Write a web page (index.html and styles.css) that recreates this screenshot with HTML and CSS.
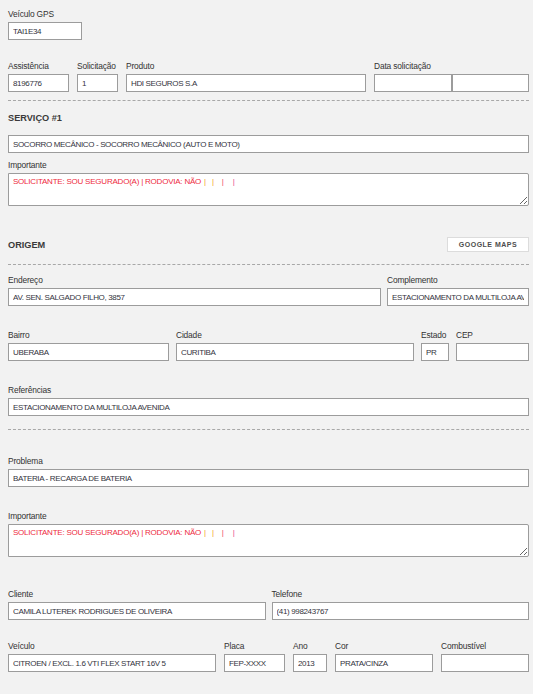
FILE: index.html
```html
<!DOCTYPE html>
<html lang="pt-BR">
<head>
<meta charset="utf-8">
<title>Serviço</title>
<link rel="stylesheet" href="styles.css">
</head>
<body>
<div class="page">
  <div class="field w-gps">
    <label class="lbl">Veículo GPS</label>
    <input class="inp" value="TAI1E34">
  </div>

  <div class="row row-ids mt20">
    <div class="field"><label class="lbl">Assistência</label><input class="inp" value="8196776"></div>
    <div class="field"><label class="lbl">Solicitação</label><input class="inp" value="1"></div>
    <div class="field"><label class="lbl">Produto</label><input class="inp" value="HDI SEGUROS S.A"></div>
    <div class="field">
      <label class="lbl">Data solicitação</label>
      <div class="pair"><input class="inp" value=""><input class="inp" value=""></div>
    </div>
  </div>

  <hr class="dash mt8">

  <div class="heading mt10">SERVIÇO #1</div>
  <input class="inp mt10" value="SOCORRO MECÂNICO - SOCORRO MECÂNICO (AUTO E MOTO)">

  <div class="field mt6">
    <label class="lbl">Importante</label>
    <div class="area"><span class="red">SOLICITANTE: SOU SEGURADO(A) | RODOVIA: NÃO</span><span class="pipe p1 orange">|</span><span class="pipe p2 orange">|</span><span class="pipe p3 pink">|</span><span class="pipe p4 magenta">|</span></div>
  </div>

  <div class="head-row mt31">
    <div class="heading">ORIGEM</div>
    <button class="btn" type="button">GOOGLE MAPS</button>
  </div>

  <hr class="dash mt12">

  <div class="row row-end mt9">
    <div class="field"><label class="lbl">Endereço</label><input class="inp" value="AV. SEN. SALGADO FILHO, 3857"></div>
    <div class="field"><label class="lbl">Complemento</label><input class="inp" value="ESTACIONAMENTO DA MULTILOJA AVENIDA"></div>
  </div>

  <div class="row row-bairro mt23">
    <div class="field"><label class="lbl">Bairro</label><input class="inp" value="UBERABA"></div>
    <div class="field"><label class="lbl">Cidade</label><input class="inp" value="CURITIBA"></div>
    <div class="field"><label class="lbl">Estado</label><input class="inp" value="PR"></div>
    <div class="field"><label class="lbl">CEP</label><input class="inp" value=""></div>
  </div>

  <div class="field mt23">
    <label class="lbl">Referências</label>
    <input class="inp" value="ESTACIONAMENTO DA MULTILOJA AVENIDA">
  </div>

  <hr class="dash mt13">

  <div class="field mt25">
    <label class="lbl">Problema</label>
    <input class="inp" value="BATERIA - RECARGA DE BATERIA">
  </div>

  <div class="field mt23">
    <label class="lbl">Importante</label>
    <div class="area"><span class="red">SOLICITANTE: SOU SEGURADO(A) | RODOVIA: NÃO</span><span class="pipe p1 orange">|</span><span class="pipe p2 orange">|</span><span class="pipe p3 pink">|</span><span class="pipe p4 magenta">|</span></div>
  </div>

  <div class="row row-cli mt31">
    <div class="field"><label class="lbl">Cliente</label><input class="inp" value="CAMILA LUTEREK RODRIGUES DE OLIVEIRA"></div>
    <div class="field"><label class="lbl">Telefone</label><input class="inp" value="(41) 998243767"></div>
  </div>

  <div class="row row-veh mt20">
    <div class="field"><label class="lbl">Veículo</label><input class="inp" value="CITROEN / EXCL. 1.6 VTI FLEX START 16V 5"></div>
    <div class="field"><label class="lbl">Placa</label><input class="inp" value="FEP-XXXX"></div>
    <div class="field"><label class="lbl">Ano</label><input class="inp" value="2013"></div>
    <div class="field"><label class="lbl">Cor</label><input class="inp" value="PRATA/CINZA"></div>
    <div class="field"><label class="lbl">Combustível</label><input class="inp" value=""></div>
  </div>
</div>
</body>
</html>
```

FILE: styles.css
```css
html, body {
  margin: 0;
  padding: 0;
  background: #f2f2f2;
}

body {
  font-family: "Liberation Sans", Arial, sans-serif;
  color: #333;
}

.page {
  padding: 8px 4px 8px 8px;
  display: flex;
  flex-direction: column;
}

.field {
  display: flex;
  flex-direction: column;
  min-width: 0;
}

.w-gps {
  width: 74px;
}

.lbl {
  display: block;
  font-size: 8.4px;
  letter-spacing: -0.15px;
  line-height: 13px;
  margin-bottom: 1px;
  white-space: nowrap;
  color: #333;
}

.inp {
  display: block;
  box-sizing: border-box;
  width: 100%;
  height: 18px;
  margin: 0;
  padding: 0 4px;
  border: 1px solid #9c9c9c;
  border-radius: 0;
  background: #fff;
  font-family: "Liberation Sans", Arial, sans-serif;
  font-size: 8px;
  letter-spacing: -0.35px;
  color: #33333d;
  outline: none;
}

.pair {
  display: flex;
}

.pair .inp {
  flex: 1;
  min-width: 0;
}

.row {
  display: grid;
  column-gap: 8px;
}

.row-ids {
  grid-template-columns: 61px 41px 1fr 155px;
}

.row-end {
  grid-template-columns: 1fr 142px;
  column-gap: 6px;
}

.row-bairro {
  grid-template-columns: 161px 1fr 28px 73px;
  column-gap: 7px;
}

.row-cli {
  grid-template-columns: 1fr 1fr;
  column-gap: 6px;
}

.row-veh {
  grid-template-columns: 208px 61px 34px 98px 1fr;
}

.dash {
  margin-left: 0;
  margin-right: 0;
  margin-bottom: 0;
  border: 0;
  border-top: 1px dashed #a8a8a8;
  height: 0;
}

.heading {
  font-weight: bold;
  font-size: 9.2px;
  line-height: 14px;
  color: #3a3a3a;
}

.head-row {
  display: flex;
  justify-content: space-between;
  align-items: center;
  height: 15px;
}

.btn {
  box-sizing: border-box;
  width: 82px;
  height: 15px;
  margin: 0;
  padding: 0;
  background: #fff;
  border: 1px solid #dcdcdc;
  border-radius: 0;
  font-family: "Liberation Sans", Arial, sans-serif;
  font-weight: bold;
  font-size: 7px;
  letter-spacing: 0.5px;
  color: #4d4d4d;
}

.area {
  box-sizing: border-box;
  height: 33px;
  padding: 2px 4px;
  border: 1px solid #9c9c9c;
  border-radius: 0 2px 2px 0;
  background: #fff;
  font-size: 8px;
  letter-spacing: -0.22px;
  line-height: 11px;
  overflow: auto;
  resize: vertical;
  white-space: nowrap;
}

.pipe {
  display: inline-block;
}

.p1 { margin-left: 3px; }
.p2 { margin-left: 6px; }
.p3 { margin-left: 8px; }
.p4 { margin-left: 9px; }

.red { color: #ee2a40; }
.orange { color: #f3a020; }
.pink { color: #f0406a; }
.magenta { color: #e8408e; }

.mt6 { margin-top: 6px; }
.mt8 { margin-top: 8px; }
.mt9 { margin-top: 9px; }
.mt10 { margin-top: 10px; }
.mt12 { margin-top: 12px; }
.mt13 { margin-top: 13px; }
.mt20 { margin-top: 20px; }
.mt23 { margin-top: 23px; }
.mt25 { margin-top: 25px; }
.mt31 { margin-top: 31px; }
```
